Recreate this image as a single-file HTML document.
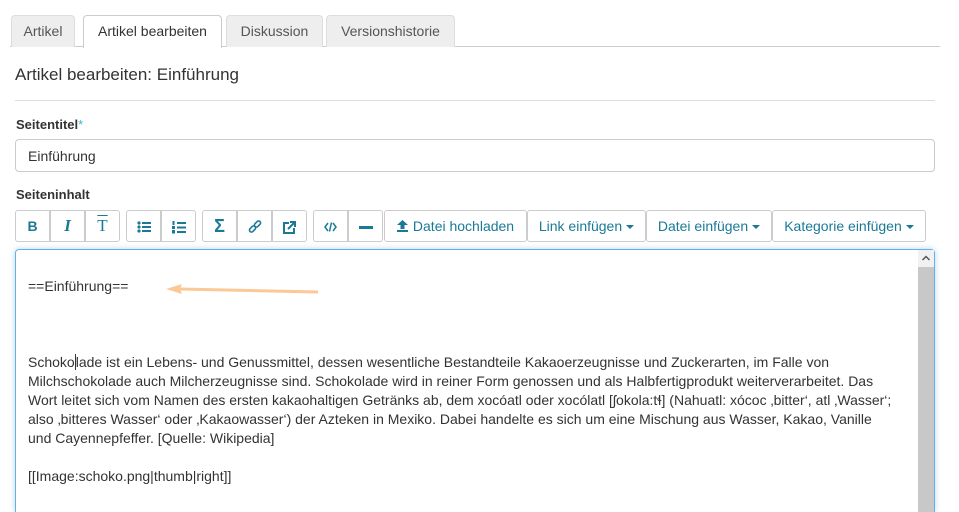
<!DOCTYPE html>
<html style="overflow:hidden;height:512px"><head><meta charset="utf-8"><style>
*{box-sizing:border-box}
body{margin:0;width:959px;height:512px;overflow:hidden;background:#fff;font-family:"Liberation Sans",Arial,sans-serif;color:#333;position:relative}
.a{position:absolute}
.tab{position:absolute;top:15px;height:32px;border:1px solid #ddd;border-bottom:none;border-radius:4px 4px 0 0;background:#eee;font-size:14px;color:#555;text-align:center;line-height:31px}
.btn{position:absolute;top:210px;height:32px;border:1px solid #ccc;background:#fff;color:#1a7a96;font-size:14px;line-height:30px;text-align:center;border-radius:3px}
.car{display:inline-block;width:0;height:0;border-left:4px solid transparent;border-right:4px solid transparent;border-top:4px solid #1a7a96;vertical-align:middle;margin-left:4px}
.txt{font-size:14px;line-height:19px;white-space:nowrap;color:#333}
</style></head><body>
<div class="a" style="left:10px;top:46px;width:930px;height:1px;background:#ccc"></div>
<div class="tab" style="left:11px;width:64px">Artikel</div>
<div class="tab" style="left:83px;width:139px;height:33px;background:#fff;border-color:#ccc;color:#333">Artikel bearbeiten</div>
<div class="tab" style="left:226px;width:97px">Diskussion</div>
<div class="tab" style="left:326px;width:129px">Versionshistorie</div>
<div class="a" style="left:15px;top:65px;font-size:17px">Artikel bearbeiten: Einführung</div>
<div class="a" style="left:15px;top:100px;width:920px;height:1px;background:#ddd"></div>
<div class="a" style="left:16px;top:117px;font-size:13px;font-weight:bold">Seitentitel<span style="color:#3cb4d8;font-weight:normal">*</span></div>
<div class="a" style="left:15px;top:139px;width:920px;height:33px;border:1px solid #ccc;border-radius:4px;font-size:14px;padding:8px 12px">Einführung</div>
<div class="a" style="left:16px;top:187px;font-size:13px;font-weight:bold">Seiteninhalt</div>

<div class="btn" style="left:15px;width:35px;font-weight:bold;border-radius:3px 0 0 3px">B</div>
<div class="btn" style="left:50px;width:35px;font-style:italic;font-weight:bold;font-family:'Liberation Serif',serif;font-size:17px;border-radius:0">I</div>
<div class="btn" style="left:85px;width:35px;font-family:'Liberation Serif',serif;font-size:17px;border-radius:0 3px 3px 0"><span style="text-decoration:overline">T</span></div>
<div class="btn" style="left:126px;width:35px;border-radius:3px 0 0 3px"><svg width="14" height="12" viewBox="0 0 14 12" style="vertical-align:middle"><g fill="#1a7a96"><circle cx="2" cy="2" r="1.6"/><circle cx="2" cy="6" r="1.6"/><circle cx="2" cy="10" r="1.6"/><rect x="5" y="1" width="9" height="2"/><rect x="5" y="5" width="9" height="2"/><rect x="5" y="9" width="9" height="2"/></g></svg></div>
<div class="btn" style="left:161px;width:35px;border-radius:0 3px 3px 0"><svg width="14" height="13" viewBox="0 0 14 13" style="vertical-align:middle"><g fill="#1a7a96"><rect x="0.5" y="0" width="2" height="4"/><rect x="0" y="5" width="3" height="3"/><rect x="0" y="9" width="3" height="3.5"/><rect x="5" y="1" width="9" height="2"/><rect x="5" y="5.5" width="9" height="2"/><rect x="5" y="10" width="9" height="2"/></g></svg></div>
<div class="btn" style="left:202px;width:35px;font-weight:bold;font-size:18px;border-radius:3px 0 0 3px">Σ</div>
<div class="btn" style="left:237px;width:35px;border-radius:0"><svg width="14" height="14" viewBox="0 0 14 14" style="vertical-align:middle"><g fill="none" stroke="#1a7a96" stroke-width="1.6"><rect x="1" y="7" width="7" height="4" rx="2" transform="rotate(-45 4.5 9)"/><rect x="6" y="2" width="7" height="4" rx="2" transform="rotate(-45 9.5 4)"/></g></svg></div>
<div class="btn" style="left:272px;width:35px;border-radius:0 3px 3px 0"><svg width="13" height="13" viewBox="0 0 13 13" style="vertical-align:middle"><path d="M6 2H1v10h10V7" fill="none" stroke="#1a7a96" stroke-width="2"/><path d="M5 8l6-6M7 1h5v5" fill="none" stroke="#1a7a96" stroke-width="2"/></svg></div>
<div class="btn" style="left:313px;width:35px;border-radius:3px 0 0 3px"><svg width="13" height="10" viewBox="0 0 13 10" style="vertical-align:middle"><path d="M4 1L1 5l3 4M9 1l3 4-3 4M7.5 0.5L5.5 9.5" fill="none" stroke="#1a7a96" stroke-width="1.5"/></svg></div>
<div class="btn" style="left:348px;width:35px;border-radius:0 3px 3px 0"><span style="display:inline-block;width:14px;height:3px;background:#1a7a96;vertical-align:middle"></span></div>
<div class="btn" style="left:384px;width:143px"><svg width="11" height="12" viewBox="0 0 11 12" style="vertical-align:-1px;margin-right:5px"><path d="M5.5 0L11 5H7.5v4h-4V5H0z" fill="#1a7a96"/><rect x="0" y="10" width="11" height="2" fill="#1a7a96"/></svg>Datei hochladen</div>
<div class="btn" style="left:527px;width:119px">Link einfügen<span class="car"></span></div>
<div class="btn" style="left:646px;width:126px">Datei einfügen<span class="car"></span></div>
<div class="btn" style="left:772px;width:154px">Kategorie einfügen<span class="car"></span></div>

<div class="a" style="left:15px;top:249px;width:920px;height:263px;border:1px solid #66afe9;border-bottom:none;border-radius:4px 4px 0 0;box-shadow:0 0 6px rgba(102,175,233,.5)"></div>
<div class="a" style="left:918px;top:250px;width:16px;height:262px;background:#f1f1f1"></div>
<div class="a" style="left:918px;top:267px;width:16px;height:245px;background:#c8c8c8"></div>
<svg class="a" style="left:921px;top:254px" width="10" height="8"><path d="M1.5 6L5 2.5 8.5 6" fill="none" stroke="#555" stroke-width="1.5"/></svg>
<div class="a txt" style="left:28px;top:277px">==Einführung==</div>
<svg class="a" style="left:160px;top:281px" width="165" height="18"><path d="M6 8L22 3L20 8L22 13Z" fill="#fbc896"/><path d="M20 8L158 11" stroke="#fbc896" stroke-width="3"/></svg>
<div class="a txt" style="left:28px;top:353px">Schoko<span style="border-left:1px solid #333"></span>lade ist ein Lebens- und Genussmittel, dessen wesentliche Bestandteile Kakaoerzeugnisse und Zuckerarten, im Falle von<br>Milchschokolade auch Milcherzeugnisse sind. Schokolade wird in reiner Form genossen und als Halbfertigprodukt weiterverarbeitet. Das<br>Wort leitet sich vom Namen des ersten kakaohaltigen Getränks ab, dem xocóatl oder xocólatl [ʃokola:tɬ] (Nahuatl: xócoc ‚bitter‘, atl ‚Wasser‘;<br>also ‚bitteres Wasser‘ oder ‚Kakaowasser‘) der Azteken in Mexiko. Dabei handelte es sich um eine Mischung aus Wasser, Kakao, Vanille<br>und Cayennepfeffer. [Quelle: Wikipedia]<br><br>[[Image:schoko.png|thumb|right]]</div>
</body></html>
